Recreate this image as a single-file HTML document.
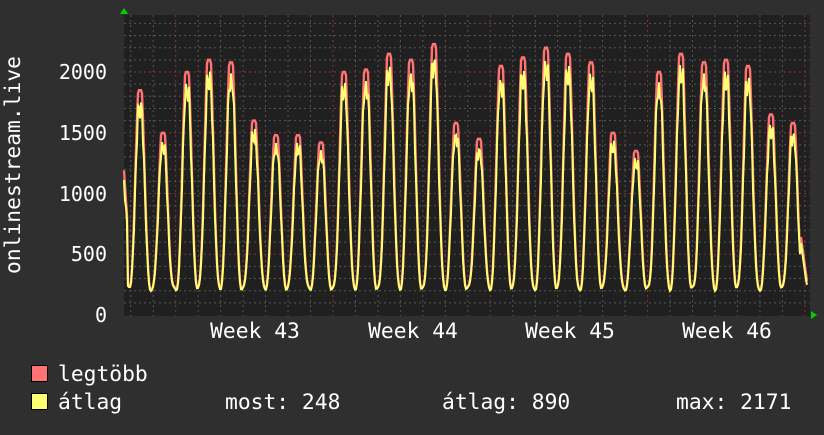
<!DOCTYPE html>
<html><head><meta charset="utf-8"><style>
html,body{margin:0;padding:0;background:#2f2f2f;}
svg text{font-family:"DejaVu Sans Mono","Liberation Mono",monospace;fill:#fff;font-size:21.3px;}
svg text.ax{font-size:20px;}
</style></head><body>
<svg id="g" width="824" height="430" xmlns="http://www.w3.org/2000/svg">
<rect width="824" height="430" fill="#2f2f2f"/>
<rect x="124" y="15" width="686" height="301" fill="#202020"/>
<g id="grid"></g>
<polyline id="red" fill="none" stroke="#ff7373" stroke-width="2.4"/>
<polyline id="yel" fill="none" stroke="#ffff73" stroke-width="2"/>
<polygon points="120,14 128,14 124,8" fill="#00d000"/>
<polygon points="811,311 811,319 817,315" fill="#00d000"/>
<g text-anchor="end">
<text class="ax" x="107" y="79">2000</text>
<text class="ax" x="107" y="140">1500</text>
<text class="ax" x="107" y="201">1000</text>
<text class="ax" x="107" y="261">500</text>
<text class="ax" x="107" y="322">0</text>
</g>
<text transform="translate(20,165) rotate(-90)" text-anchor="middle">onlinestream.live</text>
<g text-anchor="middle">
<text x="255" y="338">Week 43</text>
<text x="413" y="338">Week 44</text>
<text x="570" y="338">Week 45</text>
<text x="727" y="338">Week 46</text>
</g>
<rect x="31.5" y="365.5" width="16" height="16" fill="#ff7373" stroke="#000"/>
<rect x="31.5" y="393.5" width="16" height="16" fill="#ffff73" stroke="#000"/>
<text x="58" y="381">legtöbb</text>
<text x="58" y="409">átlag</text>
<text x="225" y="409">most: 248</text>
<text x="442" y="409">átlag: 890</text>
<text x="676" y="409">max: 2171</text>
</svg>
<script>
var g=document.getElementById("grid"),s="";
function Y(v){return 315-v*0.1215;}
for(var v=100;v<=2400;v+=100){var y=Y(v);var maj=v%500==0;
s+='<line x1="124" x2="810" y1="'+y+'" y2="'+y+'" stroke="'+(maj?'#7a3a3a':'#555')+'" stroke-dasharray="2,3"/>';}
for(var k=-3;k<=28;k++){var x=175.7+k*22.47;if(x<125||x>809)continue;var maj=((k%7)+7)%7==0;
s+='<line y1="15" y2="316" x1="'+x+'" x2="'+x+'" stroke="'+(maj?'#7a3a3a':'#555')+'" stroke-dasharray="2,3"/>';}
g.innerHTML=s;
var pk=[[140,1850],[163,1500],[187,2000],[209,2100],[231,2080],[254,1600],[276,1480],[298,1480],[321,1420],[344,2000],[366,2020],[389,2150],[411,2100],[434,2230],[456,1580],[479,1450],[501,2050],[523,2120],[546,2200],[568,2150],[591,2080],[613,1500],[636,1350],[659,2000],[681,2150],[704,2080],[726,2100],[748,2050],[771,1650],[793,1580],[816,1500]];
var r=[],yl=[];
for(var x=124;x<=807;x++){
 var best=null,d=1e9;for(var i=0;i<pk.length;i++){var dd=Math.abs(x-pk[i][0]);if(dd<d){d=dd;best=pk[i];}}
 var ph=(x-best[0])/22.47*2*Math.PI;var f=Math.pow((1+Math.cos(ph))/2,1.4);
 f=Math.min(1,f*1.1);
 var base=220+20*Math.sin(x*0.7);
 if(x<128)f=Math.max(f,0.6-(x-124)*0.08);
 var vr=base+(best[1]-base)*f;
 var vy=base-5+(best[1]*0.96-base)*f*(0.95+0.05*Math.sin(x*2.1));
 if(x>800){vr=Math.max(vr,700-(x-800)*60);vy=Math.max(vy,650-(x-800)*60);}
 r.push(x+","+Y(vr).toFixed(1));yl.push(x+","+Y(vy).toFixed(1));}
document.getElementById("red").setAttribute("points",r.join(" "));
document.getElementById("yel").setAttribute("points",yl.join(" "));
</script>
</body></html>
